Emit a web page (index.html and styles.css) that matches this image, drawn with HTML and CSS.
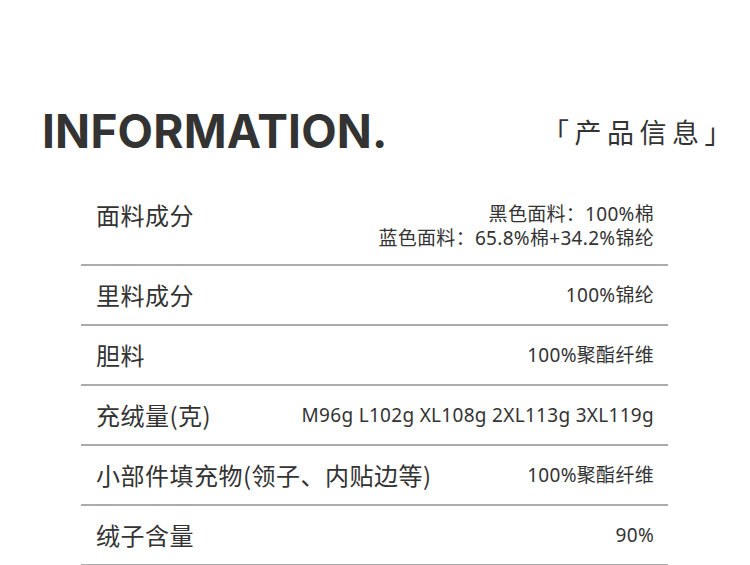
FILE: index.html
```html
<!DOCTYPE html>
<html lang="zh-CN">
<head>
<meta charset="utf-8">
<link rel="stylesheet" href="styles.css">
</head>
<body>
<div class="page">
  <div class="header">
    <div class="title">INFORMATION.</div>
    <div class="subtitle">「产品信息」</div>
  </div>
  <div class="table">
    <div class="row row-first">
      <div class="label">面料成分</div>
      <div class="value">黑色面料：100%棉<br>蓝色面料：65.8%棉+34.2%锦纶</div>
    </div>
    <div class="row">
      <div class="label">里料成分</div>
      <div class="value">100%锦纶</div>
    </div>
    <div class="row">
      <div class="label">胆料</div>
      <div class="value">100%聚酯纤维</div>
    </div>
    <div class="row">
      <div class="label">充绒量(克)</div>
      <div class="value">M96g L102g XL108g 2XL113g 3XL119g</div>
    </div>
    <div class="row">
      <div class="label">小部件填充物(领子、内贴边等)</div>
      <div class="value">100%聚酯纤维</div>
    </div>
    <div class="row">
      <div class="label">绒子含量</div>
      <div class="value">90%</div>
    </div>
  </div>
</div>
</body>
</html>
```
FILE: styles.css
```css
html, body {
  margin: 0;
  padding: 0;
  background: #ffffff;
}
.page {
  width: 750px;
  height: 565px;
  overflow: hidden;
  color: #333333;
  font-family: "Noto Sans", "Noto Sans CJK SC", sans-serif;
}
.header {
  display: flex;
  justify-content: space-between;
  align-items: center;
  height: 50px;
  margin-top: 106px;
  padding: 0 13px 0 42px;
}
.title {
  font-family: Inter, "Noto Sans", sans-serif;
  font-weight: 700;
  font-size: 46px;
  letter-spacing: 0.2px;
  line-height: 50px;
  color: #333333;
}
.subtitle {
  font-family: "Noto Sans CJK SC", sans-serif;
  font-weight: 400;
  font-size: 27px;
  letter-spacing: 5.5px;
  color: #333333;
}
.table {
  margin: 36px 82px 0 81px;
}
.row {
  display: flex;
  justify-content: space-between;
  align-items: center;
  height: 58px;
  padding: 0 14px 0 15px;
  border-bottom: 2px solid #ababab;
}
.row-first {
  height: 64px;
  padding-top: 8px;
  align-items: flex-start;
}
.label {
  font-family: "Noto Sans CJK SC", sans-serif;
  font-size: 24px;
  letter-spacing: 0.5px;
  line-height: 30px;
  color: #333333;
}
.value {
  font-family: "Noto Sans", "Noto Sans CJK SC", sans-serif;
  font-size: 19px;
  letter-spacing: 0.3px;
  line-height: 24px;
  text-align: right;
  color: #333333;
}
.row-first .value {
  padding-top: 2px;
}
```
